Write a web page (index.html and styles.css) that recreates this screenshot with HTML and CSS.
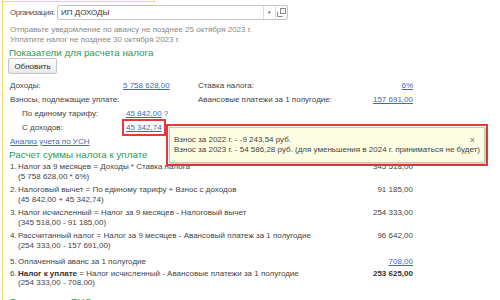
FILE: index.html
```html
<!DOCTYPE html>
<html lang="ru">
<head>
<meta charset="utf-8">
<title>Расчет налога УСН</title>
<link rel="stylesheet" href="styles.css">
</head>
<body>
<div class="form">
  <div class="top-field"></div>

  <div class="org-row">
    <span class="org-label">Организация:</span>
    <div class="select">
      <span class="select-value">ИП ДОХОДЫ</span>
      <span class="select-drop">&#9662;</span>
      <span class="select-open">
        <svg width="9" height="9" viewBox="0 0 9 9"><rect x="3.5" y="0.5" width="5" height="5" fill="none" stroke="#888"/><path d="M0.5 3.5v5h5" fill="none" stroke="#888"/></svg>
      </span>
    </div>
  </div>

  <p class="notice">Отправьте уведомление по авансу не позднее 25 октября 2023 г.<br>Уплатите налог не позднее 30 октября 2023 г.</p>

  <h2 class="section">Показатели для расчета налога</h2>
  <button class="btn">Обновить</button>

  <div class="indicators">
    <span class="ind-label">Доходы:</span>
    <span class="ind-value"><a href="#" class="link">5 758 628,00</a></span>
    <span class="ind-label">Ставка налога:</span>
    <span class="ind-value2"><a href="#" class="link">6%</a></span>

    <span class="ind-label">Взносы, подлежащие уплате:</span>
    <span></span>
    <span class="ind-label">Авансовые платежи за 1 полугодие:</span>
    <span class="ind-value2"><a href="#" class="link">157 691,00</a></span>

    <span class="ind-label sub">По единому тарифу:</span>
    <span class="ind-value shift"><a href="#" class="link">45 842,00</a> <span class="help">?</span></span>
    <span></span><span></span>

    <span class="ind-label sub">С доходов:</span>
    <span class="ind-value shift"><a href="#" class="link marked">45 342,74</a></span>
    <span></span><span></span>
  </div>

  <a href="#" class="link analysis">Анализ учета по УСН</a>

  <div class="tooltip">
    <div class="tooltip-body">
      <div>Взнос за 2022 г. - -9 243,54 руб.</div>
      <div>Взнос за 2023 г. - 54 586,28 руб. (для уменьшения в 2024 г. приниматься не будет)</div>
      <span class="tooltip-close">&times;</span>
    </div>
  </div>

  <h2 class="section">Расчет суммы налога к уплате</h2>
  <ol class="calc">
    <li class="calc-item">
      <span class="num">1.</span>
      <span class="text">Налог за 9 месяцев = Доходы * Ставка налога<br>(5 758 628,00 * 6%)</span>
      <span class="sum">345 518,00</span>
    </li>
    <li class="calc-item">
      <span class="num">2.</span>
      <span class="text">Налоговый вычет = По единому тарифу + Взнос с доходов<br>(45 842,00 + 45 342,74)</span>
      <span class="sum">91 185,00</span>
    </li>
    <li class="calc-item">
      <span class="num">3.</span>
      <span class="text">Налог исчисленный = Налог за 9 месяцев - Налоговый вычет<br>(345 518,00 - 91 185,00)</span>
      <span class="sum">254 333,00</span>
    </li>
    <li class="calc-item">
      <span class="num">4.</span>
      <span class="text">Рассчитанный налог = Налог за 9 месяцев - Авансовый платеж за 1 полугодие<br>(254 333,00 - 157 691,00)</span>
      <span class="sum">96 642,00</span>
    </li>
    <li class="calc-item paid">
      <span class="num">5.</span>
      <span class="text">Оплаченный аванс за 1 полугодие</span>
      <span class="sum"><a href="#" class="link">708,00</a></span>
    </li>
    <li class="calc-item total">
      <span class="num">6.</span>
      <span class="text"><b>Налог к уплате</b> = Налог исчисленный - Авансовые платежи за 1 полугодие<br>(254 333,00 - 708,00)</span>
      <span class="sum"><b>253 625,00</b></span>
    </li>
  </ol>

  <h2 class="section ens">Отражение в ЕНС</h2>
</div>
</body>
</html>
```

FILE: styles.css
```css
html, body {margin: 0; padding: 0; background: #fff;}
body {
 font-family: "Liberation Sans", Arial, sans-serif;
 font-size: 8px;
 color: #444;
 overflow: hidden;
}

.form {
 position: relative;
 height: 300px;
 overflow: hidden;
 margin-left: 2px;
 border-left: 1px solid #f3dc6c;
 padding-left: 7px;
}

.top-field {
 height: 1px;
 width: 152px;
 margin-left: -8px;
 border-bottom: 1px solid #f3dc6c;
 border-right: 1px solid #f3dc6c;
}

.org-row {display: flex; align-items: center; margin-top: 3px; height: 15px;}
.org-label {width: 47px; flex: none; color: #555; letter-spacing: -0.5px; white-space: nowrap;}
.select {
 display: flex;
 align-items: stretch;
 width: 231px;
 height: 15px;
 border: 1px solid #c4c4c4;
 border-radius: 2px;
 box-sizing: border-box;
}
.select-value {flex: 1; padding-left: 3px; line-height: 13px; color: #333;}
.select-drop {width: 11px; border-left: 1px solid #ddd; text-align: center; font-size: 5px; line-height: 13px; color: #555;}
.select-open {width: 11px; border-left: 1px solid #ddd; display: flex; align-items: center; justify-content: center;}

.notice {margin: 5px 0 0; line-height: 10px; color: #8a8a80;}

.section {
 margin: 3px 0 0 -1px;
 font-size: 9.8px;
 font-weight: normal;
 color: #2b9a55;
 line-height: 10px;
}

.btn {
 display: block;
 margin: 0 0 0 -2px;
 width: 49px;
 height: 16px;
 padding: 0;
 font-family: inherit;
 font-size: 8px;
 color: #333;
 border: 1px solid #c6c6c6;
 border-radius: 2px;
 background: linear-gradient(#fdfdfd, #e9e9e9);
}

.link {color: #4468b8; text-decoration: underline;}

.indicators {
 display: grid;
 grid-template-columns: 113px 75px 1fr 60px;
 width: 403px;
 margin-top: 6px;
 row-gap: 3px;
 line-height: 11px;
}
.ind-label.sub {padding-left: 12px;}
.ind-value2 {text-align: right;}
.shift {padding-left: 3px;}
.help {color: #4468b8;}
.marked {outline: 2px solid #e8383c; outline-offset: 2px;}

.analysis {display: inline-block; margin-top: 3px; line-height: 11px;}

.tooltip {
 position: absolute;
 left: 163px;
 top: 124px;
 width: 316px;
 height: 36px;
 border: 2px solid #e8383c;
 padding: 1px;
}
.tooltip-body {
 position: relative;
 height: 100%;
 box-sizing: border-box;
 border: 1px solid #c8c8b0;
 background: #fdfde4;
 box-shadow: 1px 1px 2px rgba(0,0,0,.25);
 padding: 7px 0 0 4px;
 line-height: 10px;
 color: #444;
}
.tooltip-close {position: absolute; right: 9px; top: 7px; color: #777; font-size: 9px;}

.section + .calc {margin-top: 2px;}
.calc {list-style: none; margin: 0; padding: 0; width: 403px;}
.calc-item {display: flex; margin-top: 4px; line-height: 9.5px;}
.calc-item:first-child {margin-top: 0;}
.calc-item .num {width: 8px;}
.calc-item .text {flex: 1;}
.calc-item .sum {text-align: right;}
.calc-item.paid {margin-top: 7px;}
.calc-item.total {margin-top: 2px;}
.calc b {color: #333;}

.section.ens {margin-top: 9px;}
```
